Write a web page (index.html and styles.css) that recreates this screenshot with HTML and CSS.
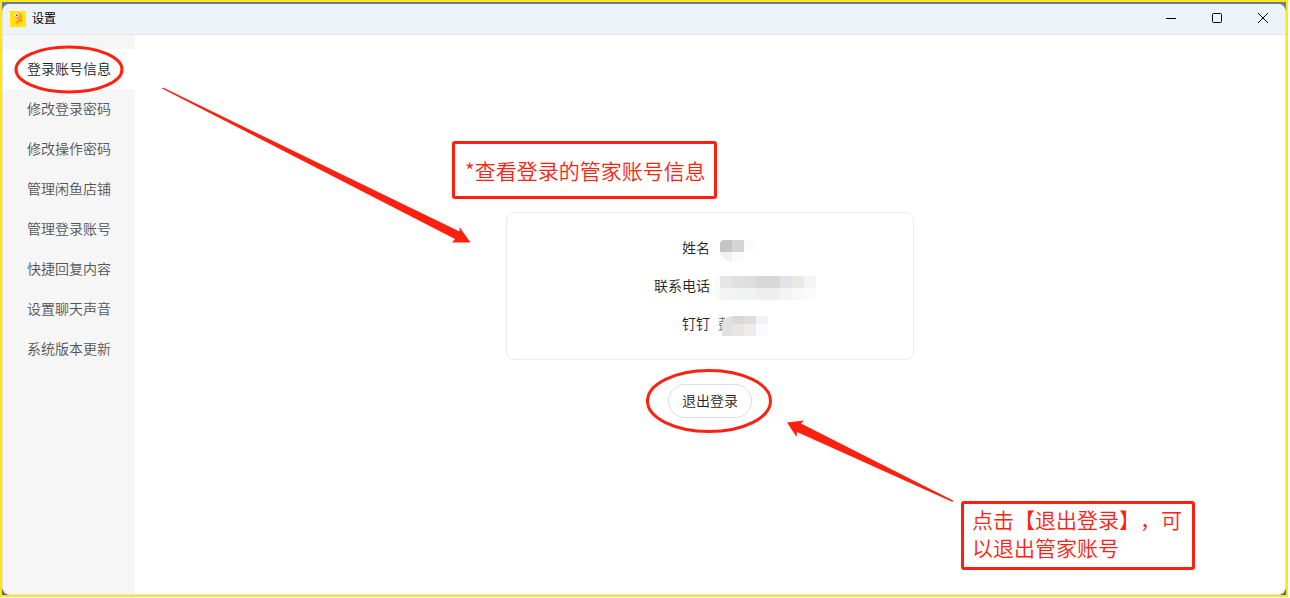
FILE: index.html
```html
<!DOCTYPE html>
<html lang="zh-CN">
<head>
    <meta charset="UTF-8">
    <meta name="viewport" content="width=device-width, initial-scale=1.0">
    <title>设置</title>
    <link rel="stylesheet" href="styles.css">
</head>
<body>
    <div class="frame">
    <div class="window">
        <header class="titlebar">
            <svg class="logo" viewBox="0 0 16 16">
                <rect width="16" height="16" fill="#ffe60f"/>
                <path d="M4.500 3C7 1 11.500 2 12.200 5c.5 2.600-.6 5-3 6.500L6.500 14.500 6.400 12 3.800 12.500 6.600 10C8 9 8 8 7 7.500L4 6.300Z" fill="#ffa02e"/>
                <path d="M11 8l2 2-3 .5z" fill="#f57c1f"/>
                <circle cx="6.500" cy="4.300" r="2" fill="#fff"/>
                <circle cx="6.800" cy="4.300" r=".9" fill="#5b3a1a"/>
            </svg>
            <h1 class="title">设置</h1>
            <div class="controls">
                <button type="button" class="control" aria-label="最小化">
                    <svg viewBox="0 0 12 12"><path d="M1 5.500h10"/></svg>
                </button>
                <button type="button" class="control" aria-label="最大化">
                    <svg viewBox="0 0 12 12"><rect x="1.500" y=".5" width="9" height="9" rx="1"/></svg>
                </button>
                <button type="button" class="control" aria-label="关闭">
                    <svg viewBox="0 0 12 12"><path d="M1 0l10 10M11 0L1 10"/></svg>
                </button>
            </div>
        </header>

        <div class="content">
            <nav class="sidebar">
                <a href="#" class="item active">登录账号信息<svg class="ring ring-nav" viewBox="0 0 110 49"><ellipse cx="55" cy="24.500" rx="53" ry="22.500"/></svg></a>
                <a href="#" class="item">修改登录密码</a>
                <a href="#" class="item">修改操作密码</a>
                <a href="#" class="item">管理闲鱼店铺</a>
                <a href="#" class="item">管理登录账号</a>
                <a href="#" class="item">快捷回复内容</a>
                <a href="#" class="item">设置聊天声音</a>
                <a href="#" class="item">系统版本更新</a>
            </nav>

            <main class="main">
                <dl class="card">
                    <dt>姓名</dt>
                    <dd>
                        <svg class="mosaic" width="100" height="26" viewBox="0 0 100 26">
                            <path d="M1 8a4 4 0 0 1 4-4h8v12H1z" fill="#c3c4c6"/>
                            <rect x="13" y="4" width="12" height="12" fill="#d6d4d3"/>
                            <rect x="25" y="4" width="12" height="12" rx="2" fill="#fafbfb"/>
                            <path d="M1 16h12v10h-2Q3 24 1 16z" fill="#f1f1f2"/>
                            <rect x="13" y="16" width="12" height="9" fill="#fbfbfb"/>
                        </svg>
                    </dd>
                    <dt>联系电话</dt>
                    <dd>
                        <svg class="mosaic" width="100" height="26" viewBox="0 0 100 26">
                            <rect x="-4" y="2" width="10" height="24" rx="4" fill="#f8fafb"/>
                            <rect x="1" y="2" width="12" height="12" fill="#e6e5e4"/>
                            <rect x="13" y="2" width="12" height="12" fill="#dfe0e2"/>
                            <rect x="25" y="2" width="12" height="12" fill="#dedede"/>
                            <rect x="37" y="2" width="24" height="12" fill="#d8d8d8"/>
                            <rect x="61" y="2" width="12" height="12" fill="#e1e3e6"/>
                            <rect x="73" y="2" width="12" height="12" fill="#e8e8e5"/>
                            <rect x="85" y="2" width="12" height="12" fill="#f4f5f8"/>
                            <rect x="1" y="14" width="12" height="12" fill="#f4f4f2"/>
                            <rect x="13" y="14" width="24" height="12" fill="#f1f2f2"/>
                            <rect x="37" y="14" width="24" height="12" fill="#eeeeee"/>
                            <rect x="61" y="14" width="12" height="12" fill="#f2f4f6"/>
                            <rect x="73" y="14" width="12" height="12" fill="#f8f8f6"/>
                            <rect x="85" y="14" width="12" height="12" fill="#fafbff"/>
                        </svg>
                    </dd>
                    <dt>钉钉</dt>
                    <dd>
                        <span class="masked">彭</span>
                        <svg class="mosaic" width="100" height="26" viewBox="0 0 100 26">
                            <rect x="6" y="2" width="10" height="12" fill="#fff"/>
                            <path d="M3 24V14Q4 5 13 4v20z" fill="#e0e1e2"/>
                            <rect x="13" y="4" width="12" height="8" fill="#dad9d8"/>
                            <rect x="25" y="4" width="12" height="8" fill="#dfdedd"/>
                            <rect x="37" y="4" width="12" height="8" fill="#f0f4f8"/>
                            <rect x="13" y="12" width="12" height="12" fill="#e6e5e5"/>
                            <rect x="25" y="12" width="12" height="12" fill="#eeedec"/>
                            <rect x="37" y="12" width="12" height="12" fill="#f9fbfe"/>
                        </svg>
                    </dd>
                </dl>
                <button type="button" class="logout">退出登录<svg class="ring ring-logout" viewBox="0 0 126 64"><ellipse cx="63" cy="32" rx="61.500" ry="30.500"/></svg></button>
            </main>
        </div>

        <svg class="arrows" width="1290" height="598" viewBox="0 0 1290 598">
            <path d="M162 88.500L163 87.500 459.500 231.500 459.500 227 470.500 242.500 452 242.500 455 239Z"/>
            <path d="M952.500 502L797 432 796.500 437 787 422.500 804 420.500 801 423.500 953 500.500Z"/>
        </svg>
        <p class="note note-info">*查看登录的管家账号信息</p>
        <p class="note note-logout">点击【退出登录】，可以退出管家账号</p>
    </div>
    </div>
</body>
</html>
```

FILE: styles.css
```css
* {
    margin: 0;
    padding: 0;
    box-sizing: border-box;
}

body {
    height: 100vh;
    padding: 0 2px 1px 0;
    background: #fff;
    color: #333;
    font-family: "Noto Sans CJK SC", sans-serif;
    font-size: 14px;
    font-weight: 350;
    line-height: 20px;
    text-spacing-trim: space-all;
    overflow: hidden;
}

button {
    font: inherit;
    color: inherit;
    cursor: pointer;
}

.frame {
    height: 100%;
    border: 2px solid #ffe60f;
    padding-top: 2px;
    background: linear-gradient(#64809c 50%, #666 50%);
}

.window {
    display: flex;
    flex-direction: column;
    height: 100%;
    border: 1px solid #dfe5ec;
    border-top: 0;
    border-radius: 8px;
    background: #fff;
    overflow: hidden;
}

/* title bar */
.titlebar {
    display: flex;
    align-items: center;
    height: 31px;
    padding-left: 7px;
    gap: 6px;
    flex: none;
    background: #eef2f9;
    border-bottom: 1px solid #e4e6ea;
}

.logo {
    width: 16px;
    height: 16px;
}

.title {
    padding-bottom: 2px;
    color: #000;
    font-size: 12px;
    font-weight: 400;
}

.controls {
    display: flex;
    height: 100%;
    margin-left: auto;
}

.control {
    width: 46px;
    padding-left: 2px;
    border: 0;
    background: none;
    display: flex;
    align-items: center;
    justify-content: center;
}

.control svg {
    width: 12px;
    height: 12px;
    fill: none;
    stroke: #000;
}

/* body of the window */
.content {
    display: flex;
    flex: 1;
}

.sidebar {
    width: 132px;
    padding-top: 14px;
    background: #f6f6f6;
}

.item {
    display: block;
    position: relative;
    height: 40px;
    padding-left: 24px;
    line-height: 38px;
    color: #555;
    text-decoration: none;
}

.active {
    background: #fff;
    color: #222;
}

.main {
    flex: 1;
    display: flex;
    flex-direction: column;
    align-items: center;
    justify-content: center;
    gap: 24px;
    color: #222;
}

.card {
    display: grid;
    grid-template-columns: 1fr 1fr;
    gap: 12px 8px;
    width: 408px;
    padding: 22px 0;
    border: 1px solid #ebebeb;
    border-radius: 8px;
}

.card dt {
    margin-right: -4px;
    line-height: 24px;
    text-align: right;
}

.card dd {
    position: relative;
    height: 26px;
    padding-left: 4px;
    line-height: 24px;
}

.mosaic {
    position: absolute;
    left: 5px;
    top: 1px;
    overflow: visible;
}

.masked {
    color: #666;
}

.logout {
    position: relative;
    height: 34px;
    padding: 0 13px 2px;
    border: 1px solid #dcdce4;
    border-radius: 17px;
    background: #fff;
}

/* red marks */
.ring {
    position: absolute;
    fill: none;
    stroke: #ff2010;
    stroke-width: 3px;
}

.ring-nav {
    left: 11px;
    top: -4px;
    width: 110px;
    height: 49px;
}

.ring-logout {
    left: -23px;
    top: -16px;
    width: 126px;
    height: 64px;
}

.arrows {
    position: absolute;
    left: 0;
    top: 0;
    fill: #ff2010;
    pointer-events: none;
}

.note {
    position: absolute;
    border: 3px solid #ff2010;
    border-radius: 3px;
    color: #ff2010;
    font-size: 21px;
    line-height: 28px;
}

.note-info {
    left: 452px;
    top: 141px;
    width: 265px;
    padding: 12px 10px;
    white-space: nowrap;
}

.note-logout {
    left: 961px;
    top: 501px;
    width: 234px;
    padding: 1px 8px 6px;
}
```
